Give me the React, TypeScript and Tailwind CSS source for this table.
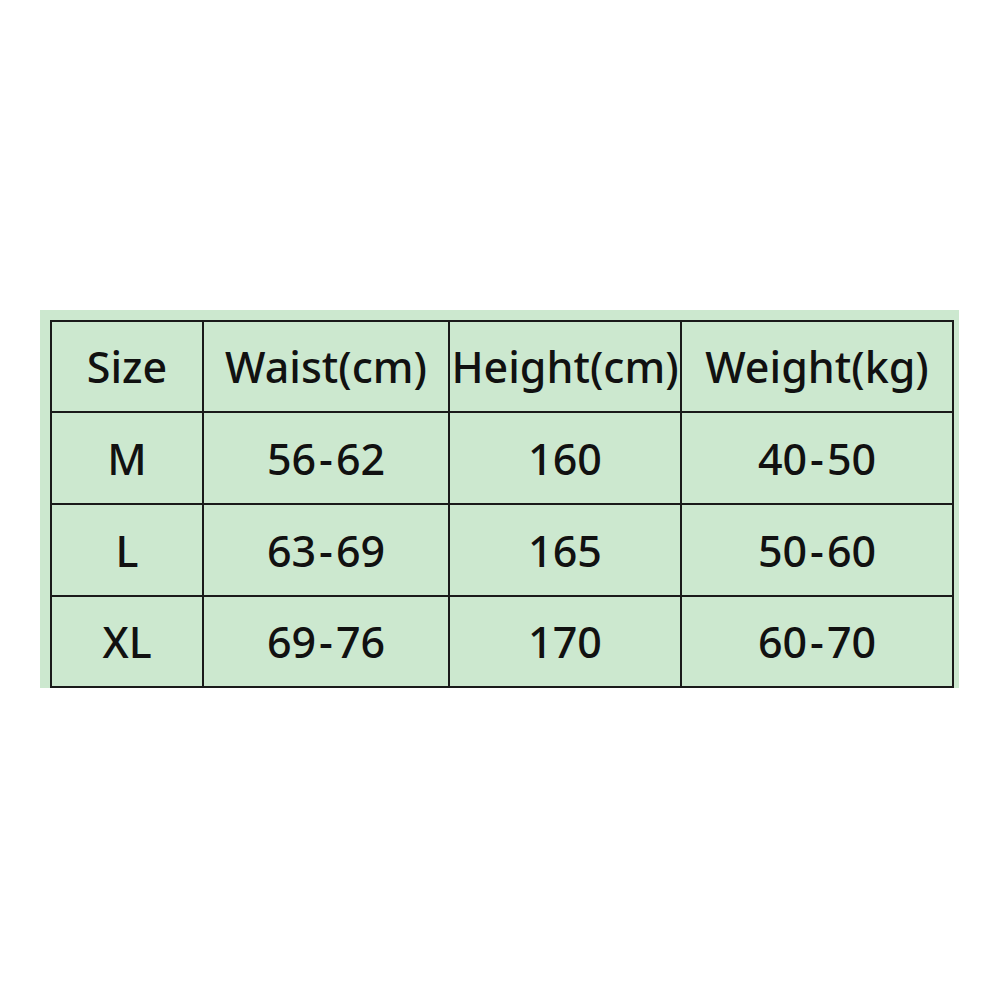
import React from 'react';

const headers = ['Size', 'Waist(cm)', 'Height(cm)', 'Weight(kg)'];
const rows = [
  ['M', '56-62', '160', '40-50'],
  ['L', '63-69', '165', '50-60'],
  ['XL', '69-76', '170', '60-70'],
];
const widths = ['w-[152px]', 'w-[246px]', 'w-[232px]', 'w-[272px]'];
const heights = ['h-[91px]', 'h-[92px]', 'h-[92px]', 'h-[91px]'];

// ranges get a little air around the dash, like the source image
function Cell({ text }: { text: string }) {
  if (/^\d+-\d+$/.test(text)) {
    const [a, b] = text.split('-');
    return (
      <>
        {a}
        <span className="mx-[3px]">-</span>
        {b}
      </>
    );
  }
  return <>{text}</>;
}

export default function App() {
  return (
    <div className="w-[1000px] h-[1000px] bg-white pt-[310px] pl-[40px]" style={{ fontFamily: '"Noto Sans", "Open Sans", sans-serif' }}>
      <div className="w-[919px] h-[378px] bg-[#cce8cf] pt-[10px] pl-[10px]">
        <table className="border-collapse text-[#111]">
          <tbody>
            {[headers, ...rows].map((row, i) => (
              <tr key={i} className={heights[i]}>
                {row.map((cell, j) => (
                  <td
                    key={j}
                    className={`${widths[j]} border-2 border-[#1a1a1a] text-center text-[43px] font-medium leading-none p-0`}
                  >
                    <Cell text={cell} />
                  </td>
                ))}
              </tr>
            ))}
          </tbody>
        </table>
      </div>
    </div>
  );
}
